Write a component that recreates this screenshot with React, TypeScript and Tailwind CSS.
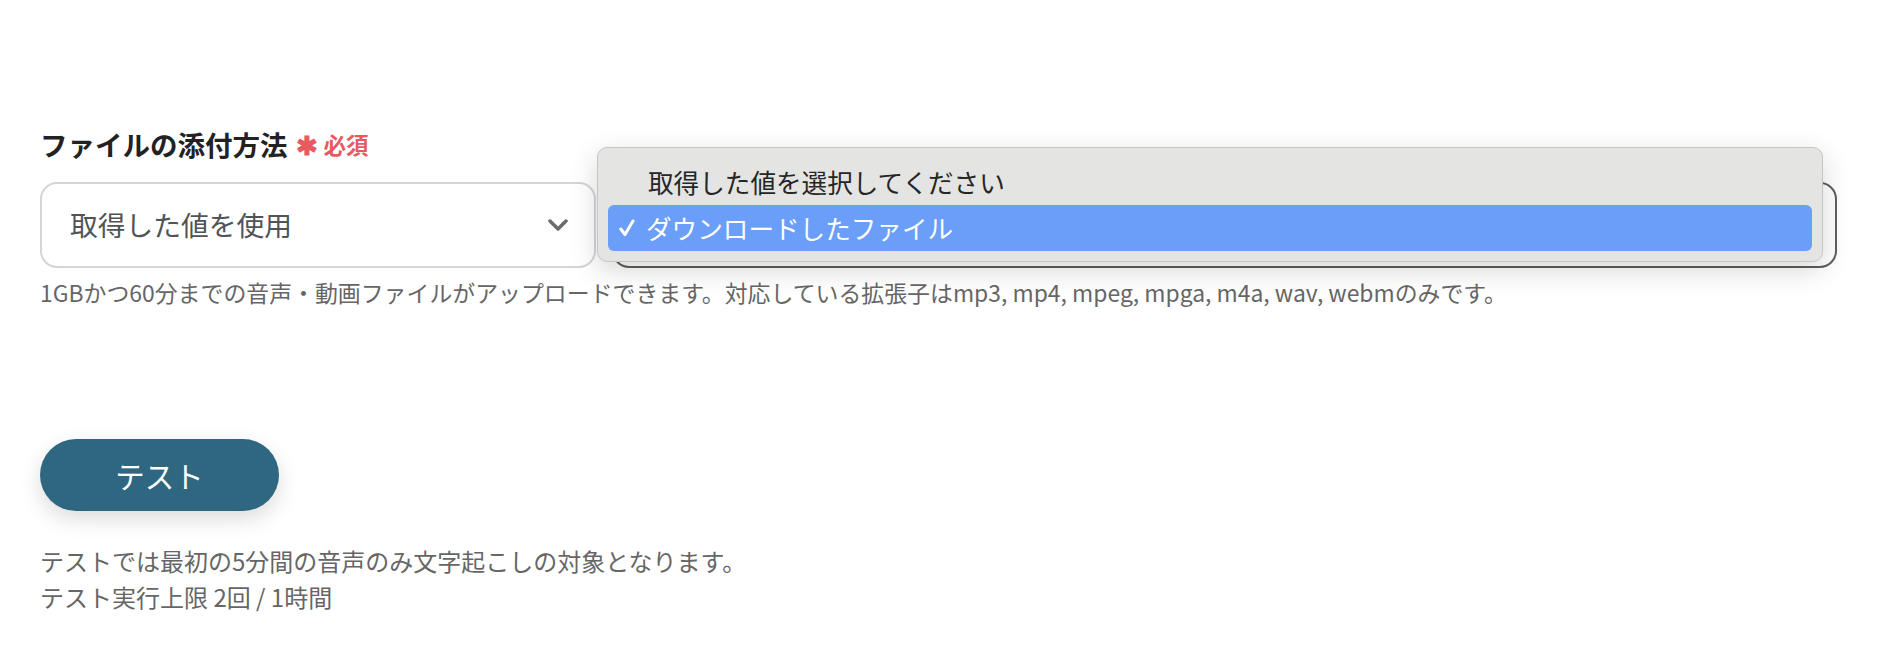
import React from "react";

const font = { fontFamily: '"Noto Sans CJK JP", "Noto Sans", sans-serif' };

const Chevron = () => (
  <svg width="20" height="13" viewBox="0 0 20 13" fill="none">
    <polyline points="2,2 10,10 18,2" stroke="#6b6b6b" strokeWidth="3.5" strokeLinecap="round" strokeLinejoin="round" />
  </svg>
);

const Check = () => (
  <svg width="16" height="18" viewBox="0 0 16 18" fill="none">
    <path d="M1.8 10 L6 15.5 L14 2" stroke="#fff" strokeWidth="3" strokeLinecap="round" strokeLinejoin="round" />
  </svg>
);

const DropdownMenu = () => (
  <div className="absolute left-[557px] top-[-35px] w-[1226px] rounded-[10px] border border-[#c6c6c6] bg-[#e4e4e3] px-[10px] pt-[11px] pb-[10px] shadow-[0_8px_28px_rgba(0,0,0,0.16)]">
    <div className="flex h-[46px] items-center pl-[40px] text-[25.6px] text-[#262626]">
      取得した値を選択してください
    </div>
    <div className="flex h-[46px] items-center gap-[11px] rounded-[6px] bg-[#6a9ef8] pl-[11px] text-[25.6px] text-white">
      <Check />
      <span>ダウンロードしたファイル</span>
    </div>
  </div>
);

export default function App() {
  return (
    <div className="min-h-[668px] w-full bg-white pl-[40px] pt-[124px]" style={font}>
      {/* Label */}
      <div className="flex items-center gap-[8px]">
        <span className="text-[27.5px] font-bold leading-[40px] text-[#222]">ファイルの添付方法</span>
        <span className="flex items-center gap-[6px] text-[22.5px] font-bold leading-[40px] text-[#e85a60]">
          <span className="text-[26px]">✱</span>
          <span>必須</span>
        </span>
      </div>

      {/* Selects */}
      <div className="relative mt-[18px] flex gap-[16px]">
        <div className="flex h-[86px] w-[556px] items-center justify-between rounded-[17px] border-2 border-[#d3d6d9] bg-white pl-[28px] pr-[26px]">
          <span className="text-[27.75px] text-[#505357]">取得した値を使用</span>
          <Chevron />
        </div>
        <div className="h-[86px] w-[1225px] rounded-[17px] border-2 border-[#5f5f5f] bg-white" />
        <DropdownMenu />
      </div>

      {/* Hint */}
      <p className="mt-[6px] text-[22.9px] leading-[36px] text-[#666]">
        1GBかつ60分までの音声・動画ファイルがアップロードできます。対応している拡張子はmp3, mp4, mpeg, mpga, m4a, wav, webmのみです。
      </p>

      {/* Test button */}
      <button className="mt-[129px] flex h-[72px] w-[239px] items-center justify-center rounded-full bg-[#2f6781] text-[29.5px] text-white shadow-[0_8px_22px_rgba(0,0,0,0.14)]">
        テスト
      </button>

      <div className="mt-[32px] text-[24px] leading-[36px] text-[#666]">
        <p>テストでは最初の5分間の音声のみ文字起こしの対象となります。</p>
        <p>テスト実行上限 2回 / 1時間</p>
      </div>
    </div>
  );
}
